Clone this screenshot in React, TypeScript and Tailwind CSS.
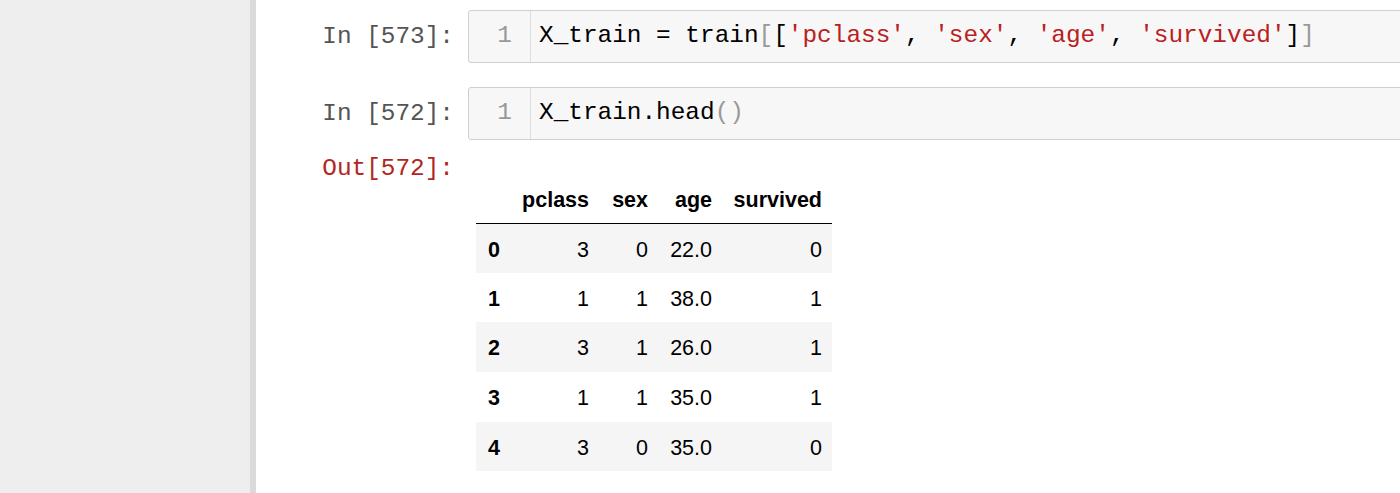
import React from "react";

const mono = { fontFamily: '"Liberation Mono", "DejaVu Sans Mono", monospace' };

function Prompt({ children, out }: { children: React.ReactNode; out?: boolean }) {
  return (
    <div
      className={`w-[212px] shrink-0 pr-[14px] text-right text-[24.4px] leading-[29px] ${out ? "text-[#b3261e]" : "text-[#555555]"}`}
      style={mono}
    >
      {children}
    </div>
  );
}

function CodeCell({ prompt, children, top }: { prompt: string; children: React.ReactNode; top: string }) {
  return (
    <div className={`flex items-center ${top}`}>
      <Prompt>{prompt}</Prompt>
      <div className="flex h-[53px] w-[1000px] shrink-0 rounded-[3px] border border-[#cfcfcf] bg-[#f7f7f7]">
        <div
          className="flex w-[62px] shrink-0 items-center justify-end border-r border-[#dddddd] pr-[18px] text-[24.4px] text-[#999999]"
          style={mono}
        >
          1
        </div>
        <div className="flex items-center whitespace-pre pl-[8px] text-[24.4px] text-black" style={mono}>
          {children}
        </div>
      </div>
    </div>
  );
}

const S = ({ children }: { children: React.ReactNode }) => <span className="text-[#ba2121]">{children}</span>;
const G = ({ children }: { children: React.ReactNode }) => <span className="text-[#999999]">{children}</span>;

const rows = [
  ["0", "3", "0", "22.0", "0"],
  ["1", "1", "1", "38.0", "1"],
  ["2", "3", "1", "26.0", "1"],
  ["3", "1", "1", "35.0", "1"],
  ["4", "3", "0", "35.0", "0"],
];

const widths = ["w-[36px]", "w-[87px]", "w-[59px]", "w-[64px]", "w-[110px]"];
const heights = ["h-[49px]", "h-[49px]", "h-[50px]", "h-[50px]", "h-[49px]"];

export default function App() {
  const sans = { fontFamily: '"Liberation Sans", Arial, sans-serif' };
  return (
    <div className="flex h-[493px] w-[1400px] overflow-hidden bg-white">
      <div className="w-[250px] shrink-0 bg-[#eeeeee]" />
      <div className="w-[6px] shrink-0 bg-[#dadada]" />
      <div className="flex min-w-0 flex-1 flex-col overflow-hidden">
        <CodeCell prompt="In [573]:" top="mt-[10px]">
          X_train = train<G>[</G>[<S>'pclass'</S>, <S>'sex'</S>, <S>'age'</S>, <S>'survived'</S>]<G>]</G>
        </CodeCell>
        <CodeCell prompt="In [572]:" top="mt-[24px]">
          X_train.head<G>()</G>
        </CodeCell>
        <div className="mt-[14px] flex items-start">
          <Prompt out>Out[572]:</Prompt>
          <div className="ml-[8px] pt-[24px]">
            <div className="flex w-fit flex-col text-[21.5px] text-black" style={sans}>
              <div className="flex h-[46px] items-center border-b border-black font-bold">
                {["", "pclass", "sex", "age", "survived"].map((h, i) => (
                  <div key={i} className={`${widths[i]} pr-[10px] text-right`}>
                    {h}
                  </div>
                ))}
              </div>
              {rows.map((r, ri) => (
                <div
                  key={ri}
                  className={`flex ${heights[ri]} items-center pt-[3px] ${ri % 2 === 0 ? "bg-[#f5f5f5]" : "bg-white"}`}
                >
                  {r.map((c, ci) => (
                    <div
                      key={ci}
                      className={`${widths[ci]} ${ci === 0 ? "pl-[12px] text-left font-bold" : "pr-[10px] text-right"}`}
                    >
                      {c}
                    </div>
                  ))}
                </div>
              ))}
            </div>
          </div>
        </div>
      </div>
    </div>
  );
}
